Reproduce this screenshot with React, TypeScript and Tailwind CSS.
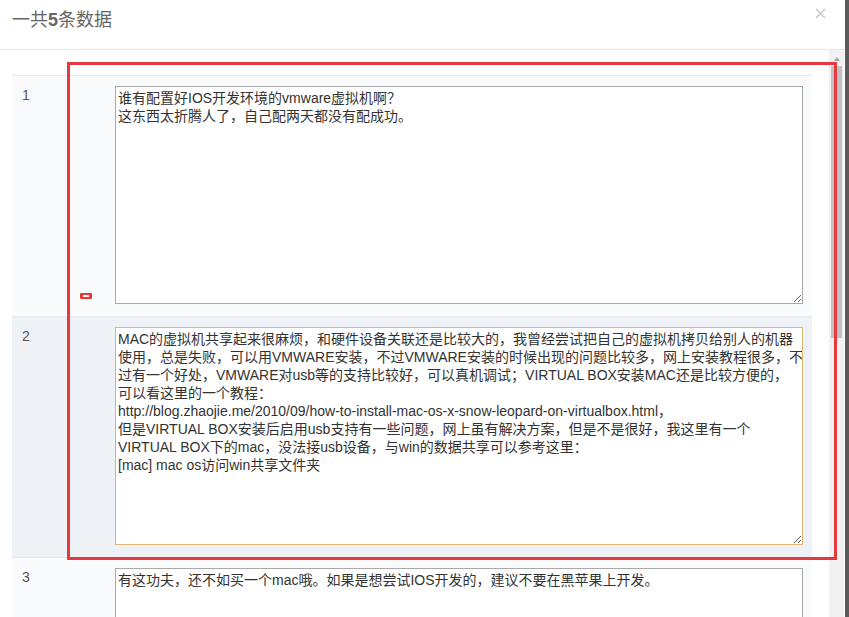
const rows = [
  {
    n: "1",
    text: "谁有配置好IOS开发环境的vmware虚拟机啊？\n这东西太折腾人了，自己配两天都没有配成功。",
    focused: false,
    minus: true,
  },
  {
    n: "2",
    text: [
      "MAC的虚拟机共享起来很麻烦，和硬件设备关联还是比较大的，我曾经尝试把自己的虚拟机拷贝给别人的机器",
      "使用，总是失败，可以用VMWARE安装，不过VMWARE安装的时候出现的问题比较多，网上安装教程很多，不",
      "过有一个好处，VMWARE对usb等的支持比较好，可以真机调试；VIRTUAL BOX安装MAC还是比较方便的，",
      "可以看这里的一个教程：",
      "http://blog.zhaojie.me/2010/09/how-to-install-mac-os-x-snow-leopard-on-virtualbox.html，",
      "但是VIRTUAL BOX安装后启用usb支持有一些问题，网上虽有解决方案，但是不是很好，我这里有一个",
      "VIRTUAL BOX下的mac，没法接usb设备，与win的数据共享可以参考这里：",
      "[mac] mac os访问win共享文件夹",
    ].join("\n"),
    focused: true,
    minus: false,
  },
  {
    n: "3",
    text: "有这功夫，还不如买一个mac哦。如果是想尝试IOS开发的，建议不要在黑苹果上开发。",
    focused: false,
    minus: false,
  },
];

function MinusIcon() {
  return (
    <span className="flex h-[6px] w-[12px] items-center justify-center rounded-[1px] bg-[#e5383b]">
      <span className="h-[2px] w-[6px] bg-white" />
    </span>
  );
}

export default function App() {
  return (
    <div className="relative flex h-[617px] w-[849px] overflow-hidden bg-[#5b5b5b] font-['Liberation_Sans','Noto_Sans_CJK_SC',sans-serif]">
      {/* Modal */}
      <div className="flex h-full w-[845px] flex-col bg-white">
        {/* Header */}
        <div className="relative h-[50px] shrink-0 border-b border-[#e8e8e8] px-3 pt-[8px]">
          <h3 className="text-[18px] leading-[24px] font-normal text-[#666]">
            一共<b className="font-bold">5</b>条数据
          </h3>
          <button className="absolute top-[8px] right-[19px] text-[#c4c4c4]">
            <svg width="11" height="11" viewBox="0 0 11 11">
              <path d="M1 1L10 10M10 1L1 10" stroke="currentColor" strokeWidth="1.3" />
            </svg>
          </button>
        </div>

        {/* Body */}
        <div className="flex min-h-0 flex-1">
          <div className="w-[829px] shrink-0 overflow-hidden pt-[25px] pl-3 pr-[17px]">
            <div className="border-t border-[#e6e9ee]">
              {rows.map((r) => (
                <div
                  key={r.n}
                  className={`flex border-b border-[#e6e9ee] ${
                    r.focused ? "bg-[#eef1f6]" : "bg-[#f9fafc]"
                  }`}
                >
                  <div className="w-[56px] shrink-0 pt-[10px] pl-[10px] text-[14px] leading-[18px] text-[#555]">
                    {r.n}
                  </div>
                  <div className="flex w-[37px] shrink-0 items-end pb-[17px] pl-[12px]">
                    {r.minus && <MinusIcon />}
                  </div>
                  <div className="flex-1 pt-[10px] pr-[9px] pb-[12px] pl-[10px]">
                    <textarea
                      readOnly
                      wrap="off"
                      defaultValue={r.text}
                      className={`block h-[218px] w-full resize overflow-hidden border bg-white px-[2px] py-[2px] text-[14px] leading-[18px] text-[#333] outline-none ${
                        r.focused ? "border-[#dcb56e]" : "border-[#a9a9a9]"
                      }`}
                    />
                  </div>
                </div>
              ))}
            </div>
          </div>

          {/* Scrollbar */}
          <div className="flex w-[15px] shrink-0 flex-col items-center bg-[#f1f1f1]">
            <svg width="8" height="6" viewBox="0 0 8 6" className="mt-[6px]">
              <path d="M4 1L7 5H1Z" fill="#a3a3a3" />
            </svg>
            <div className="mt-[4px] h-[272px] w-[11px] bg-[#c1c1c1]" />
          </div>
        </div>
      </div>

      {/* Page behind the modal */}
      <div className="flex-1 bg-[#5b5b5b]" />

      {/* Red annotation frame */}
      <div className="pointer-events-none absolute top-[62px] left-[67px] h-[498px] w-[770px] border-[3px] border-[#e6393f]" />
    </div>
  );
}
